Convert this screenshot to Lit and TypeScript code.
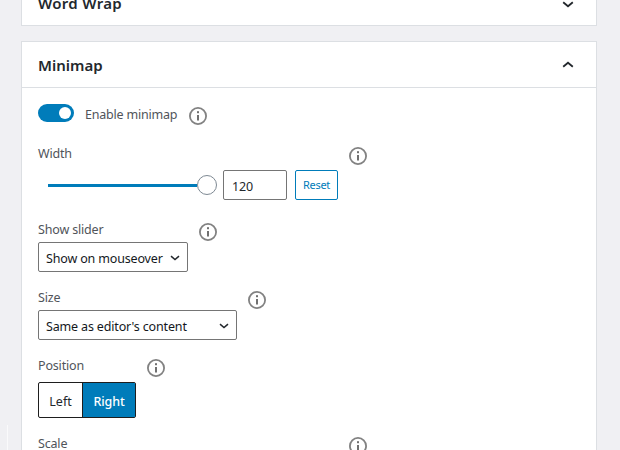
import { LitElement, html, css, svg } from "lit";
import { customElement, property } from "lit/decorators.js";

@customElement("info-icon")
class InfoIcon extends LitElement {
  static styles = css`
    :host { display: block; width: 18px; height: 18px; flex: none; }
    svg { display: block; }
  `;
  render() {
    return html`<svg width="18" height="18" viewBox="0 0 18 18">
      <circle cx="9" cy="9" r="8.1" fill="none" stroke="#828282" stroke-width="1.8" />
      <rect x="8" y="4.2" width="2" height="2" fill="#707070" />
      <rect x="8" y="8" width="2" height="5.5" fill="#707070" />
    </svg>`;
  }
}

@customElement("chevron-icon")
class ChevronIcon extends LitElement {
  @property({ type: Boolean }) up = false;
  @property({ type: Boolean }) small = false;
  static styles = css`
    :host { display: block; flex: none; }
    svg { display: block; }
  `;
  render() {
    const d = this.up ? "M1.2 5.7 L6 1.7 L10.8 5.7" : "M1.2 1.3 L6 5.3 L10.8 1.3";
    const shape = svg`<path d=${d} fill="none" stroke="#23282d" stroke-width="1.8" />`;
    return this.small
      ? html`<svg width="10" height="6" viewBox="0 0 12 7">${shape}</svg>`
      : html`<svg width="12" height="7" viewBox="0 0 12 7">${shape}</svg>`;
  }
}

@customElement("setting-field")
class SettingField extends LitElement {
  @property() label = "";
  @property({ type: Boolean }) tight = false;
  static styles = css`
    :host { display: flex; align-items: flex-start; gap: 11px; }
    .label { height: 26px; line-height: 20px; font-size: 12.5px; letter-spacing: -0.17px; color: #50545a; white-space: nowrap; }
    .label.tight { height: 22px; }
    info-icon { margin-top: 3px; }
  `;
  render() {
    return html`<div>
        <div class="label ${this.tight ? "tight" : ""}">${this.label}</div>
        <slot></slot>
      </div>
      <info-icon></info-icon>`;
  }
}

@customElement("app-root")
class AppRoot extends LitElement {
  static styles = css`
    :host {
      display: block; position: relative; box-sizing: border-box; height: 450px; overflow: hidden;
      padding: 0 23px 0 21px; background: #f0f0f3; color: #23282d;
      font-family: "Noto Sans", "Open Sans", sans-serif; font-size: 12.5px;
    }
    * { box-sizing: border-box; }
    .edge { position: absolute; left: 7px; top: 425px; width: 1px; height: 25px; background: #fafafb; }
    .panel { background: #fff; border: 1px solid #dcdfe3; }
    .first { margin-top: -20px; height: 46px; margin-bottom: 15px; }
    .second { height: 480px; }
    .head { display: flex; justify-content: space-between; align-items: center; height: 46px; padding: 0 22px 0 16px; border-bottom: 1px solid #dcdfe3; }
    .first .head { height: 45px; border: 0; padding-top: 1px; }
    .title { font-size: 15px; font-weight: 600; line-height: 20px; }
    .first .title { letter-spacing: 0.3px; margin-top: -2px; }
    .body { padding: 0 16px; }
    .toggle-row { display: flex; height: 56px; padding-top: 16px; }
    .toggle { width: 36px; height: 18px; border-radius: 9px; background: #007cba; padding: 3px; display: flex; justify-content: flex-end; }
    .knob { width: 12px; height: 12px; border-radius: 50%; background: #fff; }
    .toggle-text { margin-left: 11px; width: 93px; height: 20px; line-height: 22px; letter-spacing: -0.2px; color: #50545a; white-space: nowrap; }
    .toggle-row info-icon { margin: 3px 0 0 11px; }
    .fields { display: flex; flex-direction: column; gap: 16px; }
    .width-field { margin-bottom: 4px; }
    .range { display: flex; align-items: center; width: 300px; height: 30px; }
    .track { width: 149px; height: 3px; margin-left: 10px; background: #007cba; }
    .thumb { width: 20px; height: 20px; border: 1px solid #7e8993; border-radius: 50%; background: #fff; }
    .number { width: 64px; height: 30px; margin: 0 8px 0 6px; padding-left: 8px; border: 1px solid #757575; border-radius: 2px; line-height: 31px; letter-spacing: -0.2px; }
    .reset { width: 43px; height: 30px; border: 1px solid #007cba; border-radius: 2px; color: #007cba; font-size: 11px; letter-spacing: -0.3px; text-align: center; line-height: 28px; }
    .select { display: flex; align-items: center; justify-content: space-between; height: 30px; padding: 2px 7px 0 7px; border: 1px solid #757575; border-radius: 2px; white-space: nowrap; letter-spacing: -0.16px; color: #14181c; }
    .select chevron-icon { margin-top: -1px; }
    .s1 { width: 150px; }
    .s2 { width: 199px; }
    .buttons { display: flex; width: 98px; height: 36px; border: 1px solid #1e1e1e; border-radius: 2px; line-height: 37px; text-align: center; }
    .left { width: 43px; }
    .right { flex: 1; background: #007cba; color: #fff; border-left: 1px solid #1e1e1e; font-weight: 500; letter-spacing: -0.1px; }
    .blank { width: 300px; height: 30px; }
  `;
  render() {
    return html`
      <div class="edge"></div>
      <section class="panel first">
        <div class="head"><span class="title">Word Wrap</span><chevron-icon></chevron-icon></div>
      </section>
      <section class="panel second">
        <div class="head"><span class="title">Minimap</span><chevron-icon up></chevron-icon></div>
        <div class="body">
          <div class="toggle-row">
            <div class="toggle"><div class="knob"></div></div>
            <div class="toggle-text">Enable minimap</div>
            <info-icon></info-icon>
          </div>
          <div class="fields">
            <setting-field class="width-field" label="Width">
              <div class="range">
                <div class="track"></div><div class="thumb"></div>
                <div class="number">120</div>
                <div class="reset">Reset</div>
              </div>
            </setting-field>
            <setting-field label="Show slider" tight>
              <div class="select s1"><span>Show on mouseover</span><chevron-icon small></chevron-icon></div>
            </setting-field>
            <setting-field label="Size" tight>
              <div class="select s2"><span>Same as editor's content</span><chevron-icon small></chevron-icon></div>
            </setting-field>
            <setting-field label="Position">
              <div class="buttons"><div class="left">Left</div><div class="right">Right</div></div>
            </setting-field>
            <setting-field label="Scale"><div class="blank"></div></setting-field>
          </div>
        </div>
      </section>
    `;
  }
}
